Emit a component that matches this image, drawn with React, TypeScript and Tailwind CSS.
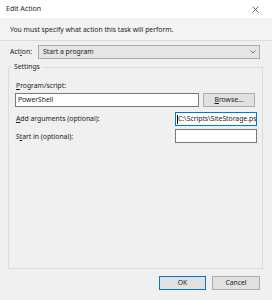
import React from "react";

export default function App() {
  const font = { fontFamily: '"Noto Sans", "Open Sans", "Liberation Sans", sans-serif' };
  return (
    <div
      className="w-[272px] h-[300px] bg-[#f0f0f0] text-[6.8px] leading-[10px] text-[#1a1a1a] flex flex-col overflow-hidden"
      style={font}
    >
      {/* Title bar */}
      <div className="h-[18px] bg-white flex items-center justify-between pl-[6px] pr-[13px]">
        <span className="text-[7px] text-[#222]">Edit Action</span>
        <svg width="7" height="7" viewBox="0 0 7 7" className="mt-[1px]">
          <path d="M0.5 0.5 L6.5 6.5 M6.5 0.5 L0.5 6.5" stroke="#444" strokeWidth="0.8" />
        </svg>
      </div>

      {/* Instruction */}
      <div className="h-[23px] bg-[#f3f3f3] border-b border-[#dcdcdc] flex items-center pl-[10px] pt-[2px]">
        <span>You must specify what action this task will perform.</span>
      </div>

      {/* Action row */}
      <div className="mt-[4px] flex items-center pl-[10px]">
        <span className="w-[28px]">
          Act<span className="underline">i</span>on:
        </span>
        <div className="w-[222px] h-[14px] bg-[#e5e5e5] border border-[#acacac] flex items-center justify-between pl-[4px] pr-[3px]">
          <span>Start a program</span>
          <svg width="6" height="4" viewBox="0 0 6 4">
            <path d="M0.5 0.5 L3 3 L5.5 0.5" stroke="#555" strokeWidth="0.8" fill="none" />
          </svg>
        </div>
      </div>

      {/* Settings group */}
      <div className="relative mt-[8px] ml-[8px] w-[255px] h-[202px] border border-[#dcdcdc] pl-[6px] pt-[13px]">
        <span className="absolute left-[3px] top-[-6px] bg-[#f0f0f0] px-[2px]">Settings</span>
        <div className="pl-[1px]">
          <span className="underline">P</span>rogram/script:
        </div>
        <div className="mt-[2px] flex items-center">
          <div className="w-[184px] h-[14px] bg-white border border-[#7a7a7a] flex items-center pl-[2px]">
            PowerShell
          </div>
          <div className="ml-[4px] w-[52px] h-[14px] bg-[#e1e1e1] border border-[#adadad] flex items-center justify-center">
            <span>
              <span className="underline">B</span>rowse...
            </span>
          </div>
        </div>
        <div className="mt-[5px] flex items-center">
          <span className="w-[160px] pl-[1px]">
            <span className="underline">A</span>dd arguments (optional):
          </span>
          <div className="w-[82px] h-[14px] bg-white border border-[#0078d7] flex items-center pl-[1px] overflow-hidden whitespace-nowrap">
            <span className="w-[1px] h-[9px] bg-black shrink-0" />
            <span>C:\Scripts\SiteStorage.ps</span>
          </div>
        </div>
        <div className="mt-[3px] flex items-center">
          <span className="w-[160px] pl-[1px] pt-[2px]">
            S<span className="underline">t</span>art in (optional):
          </span>
          <div className="w-[82px] h-[14px] bg-white border border-[#7a7a7a]" />
        </div>
      </div>

      {/* Buttons */}
      <div className="mt-[7px] flex justify-end gap-[6px] pr-[12px]">
        <div className="w-[47px] h-[14px] bg-[#e1e1e1] border border-[#0078d7] flex items-center justify-center">
          OK
        </div>
        <div className="w-[48px] h-[14px] bg-[#e1e1e1] border border-[#adadad] flex items-center justify-center">
          Cancel
        </div>
      </div>
    </div>
  );
}
